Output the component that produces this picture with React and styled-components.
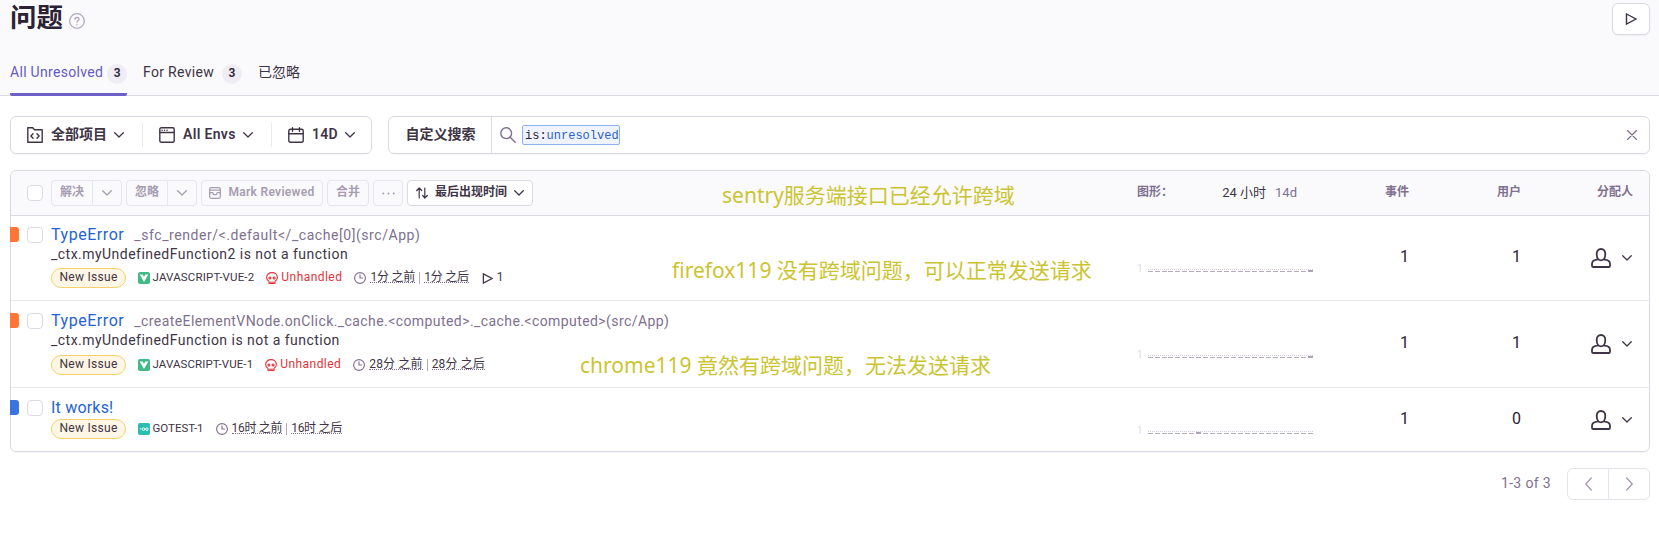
import React from "react";
import styled, { createGlobalStyle } from "styled-components";

const GlobalStyle = createGlobalStyle`
  *, *::before, *::after { box-sizing: border-box; }
  body {
    margin: 0;
    background: #fff;
    color: #3e3446;
    font: 14px/20px Roboto, "Noto Sans CJK SC", sans-serif;
  }
  button { font: inherit; color: inherit; padding: 0; margin: 0; }
  svg { display: block; flex: none; }
`;

const Page = styled.div`
  position: relative;
  height: 554px;
  overflow: hidden;
`;

const Header = styled.header`
  height: 96px;
  background: #fafafc;
  border-bottom: 1px solid #dcd9e2;
  padding: 3px 9px 0 10px;
  display: flex;
  flex-direction: column;
  justify-content: space-between;
`;

const TitleRow = styled.div`
  display: flex;
  justify-content: space-between;
  height: 32px;
`;

const Title = styled.h1`
  margin: 0;
  display: flex;
  align-items: center;
  gap: 6px;
  font-size: 26.400px;
  line-height: 30px;
  height: 30px;
  font-weight: 700;
  color: #2b2233;
  svg { margin-top: 6px; }
`;

const PlayButton = styled.button`
  width: 38px;
  height: 32px;
  display: flex;
  align-items: center;
  justify-content: center;
  background: #fff;
  border: 1px solid #dcd9e2;
  border-radius: 6px;
  box-shadow: 0 1px 1px rgba(43, 34, 51, 0.05);
`;

const Tabs = styled.nav`
  display: flex;
  gap: 16px;
  height: 35px;
  margin-bottom: -1px;
`;

const Tab = styled.div`
  display: flex;
  align-items: flex-start;
  gap: ${(p) => p.$gap || 4}px;
  height: 35px;
  padding-top: 1px;
  line-height: 20px;
  letter-spacing: ${(p) => p.$ls || 0}px;
  color: ${(p) => (p.$active ? "#6559c5" : "#3e3446")};
  border-bottom: 3px solid ${(p) => (p.$active ? "#6c5fc7" : "transparent")};
  border-radius: 2px;
  white-space: nowrap;
`;

const Badge = styled.span`
  width: 20px;
  height: 20px;
  border-radius: 10px;
  background: #efecf3;
  color: #2b2233;
  font-size: 12px;
  font-weight: 600;
  line-height: 19px;
  letter-spacing: 0;
  text-align: center;
  margin-top: 2px;
`;

const Filters = styled.div`
  display: flex;
  gap: 16px;
  padding: 20px 9px 16px 10px;
  font-weight: 600;
`;

const FilterGroup = styled.div`
  display: flex;
  align-items: center;
  width: 362px;
  height: 38px;
  border: 1px solid #dcd9e2;
  border-radius: 6px;
  box-shadow: 0 1px 1px rgba(43, 34, 51, 0.04);
`;

const Filter = styled.div`
  display: flex;
  align-items: center;
  height: 24px;
  width: ${(p) => p.$w}px;
  padding-left: 16px;
  line-height: 20px;
  letter-spacing: ${(p) => p.$ls || 0}px;
  white-space: nowrap;
  & + & { border-left: 1px solid #ebe8ef; }
  span { margin: 0 7px 0 8px; padding-bottom: 2px; }
`;

const Search = styled.div`
  flex: 1;
  display: flex;
  align-items: center;
  height: 38px;
  border: 1px solid #dcd9e2;
  border-radius: 6px;
  padding-right: 12px;
  box-shadow: 0 1px 1px rgba(43, 34, 51, 0.04);
`;

const SavedSearch = styled.div`
  width: 103px;
  height: 36px;
  line-height: 34px;
  text-align: center;
  padding-left: 1px;
  border-right: 1px solid #dcd9e2;
  margin-right: 8px;
`;

const Token = styled.div`
  height: 20px;
  margin-left: 6px;
  padding: 0 2px;
  border: 1px solid #8fb2ee;
  border-radius: 2px;
  background: #eef3fd;
  font: 500 12px/20px "Liberation Mono", monospace;
  color: #2b2233;
  flex: 1 0 auto;
  max-width: 98px;
  white-space: nowrap;
  b { font-weight: 400; color: #2c5fcf; }
`;

const Spacer = styled.div`flex: 1;`;

const Panel = styled.section`
  margin: 0 9px 0 10px;
  border: 1px solid #dcd9e2;
  border-radius: 6px;
  box-shadow: 0 1px 1px rgba(43, 34, 51, 0.04);
`;

const columns = "minmax(0, 1fr) 177px 95px 112px 128px";

const PanelHeader = styled.div`
  display: grid;
  grid-template-columns: ${columns};
  height: 45px;
  background: #fafafc;
  border-bottom: 1px solid #dcd9e2;
  border-radius: 6px 6px 0 0;
  font-size: 12px;
  font-weight: 600;
  color: #80708f;
`;

const Toolbar = styled.div`
  display: flex;
  gap: 4px;
  padding: 9px 0 0 16px;
`;

const Checkbox = styled.span`
  flex: none;
  width: 16px;
  height: 16px;
  border: 1px solid #dcd9e2;
  border-radius: 4px;
  background: #fff;
  margin: ${(p) => p.$m || "0"};
`;

const ToolButton = styled.button`
  display: flex;
  align-items: center;
  justify-content: center;
  width: ${(p) => p.$w}px;
  height: 26px;
  border: 1px solid ${(p) => (p.$on ? "#dcd9e2" : "#e8e5ed")};
  border-radius: 4px;
  background: ${(p) => (p.$on ? "#fff" : "transparent")};
  color: ${(p) => (p.$on ? "#3e3446" : "#a79db2")};
  line-height: 22px;
  letter-spacing: ${(p) => p.$ls || 0}px;
  gap: ${(p) => (p.$on ? 6.500 : 7)}px;
  white-space: nowrap;
  span { padding-bottom: 2px; }
`;

const Split = styled.div`
  display: flex;
  ${ToolButton}:first-child { border-radius: 4px 0 0 4px; }
  ${ToolButton}:last-child { border-radius: 0 4px 4px 0; border-left: 0; }
`;

const ChartHead = styled.div`
  display: flex;
  line-height: 18px;
  padding: 12px 17px 0 0;
`;

const Range = styled.span`
  font-size: 13px;
  font-weight: 400;
  color: ${(p) => (p.$active ? "#3e3446" : "#80708f")};
  margin-left: ${(p) => (p.$active ? "auto" : "9px")};
  margin-top: 1px;
`;

const HeadCell = styled.div`
  text-align: right;
  line-height: 18px;
  padding: 12px ${(p) => p.$pr || 0}px 0 0;
`;

const Row = styled.article`
  display: grid;
  grid-template-columns: ${columns};
  height: ${(p) => p.$h}px;
  &:not(:last-child) { border-bottom: 1px solid #ebe9ee; }
`;

const Issue = styled.div`
  display: flex;
  align-items: flex-start;
  padding-top: ${(p) => p.$top}px;
  margin-left: -1px;
`;

const Level = styled.span`
  flex: none;
  width: 9px;
  height: 15px;
  border-radius: 0 3px 3px 0;
  background: ${(p) => p.$color};
  margin-right: 8px;
`;

const Body = styled.div`
  margin: -2px 0 0 8px;
  white-space: nowrap;
`;

const Heading = styled.div`
  display: flex;
  align-items: baseline;
  line-height: 20px;
  height: 20px;
`;

const IssueTitle = styled.a`
  font-size: 16px;
  color: #2562d4;
  letter-spacing: ${(p) => p.$ls || 0}px;
  margin-right: 10px;
`;

const Culprit = styled.span`
  color: #80708f;
  letter-spacing: ${(p) => p.$ls || 0}px;
`;

const Message = styled.div`
  line-height: 18px;
  height: 18px;
  letter-spacing: ${(p) => p.$ls || 0}px;
`;

const Meta = styled.div`
  display: flex;
  align-items: center;
  height: 20px;
  margin-top: ${(p) => p.$mt}px;
  font-size: 12px;
  line-height: 18px;
`;

const NewTag = styled.span`
  width: 75px;
  height: 20px;
  border: 1px solid #f6d06e;
  border-radius: 10px;
  background: #fff7e5;
  line-height: 17px;
  text-align: center;
  letter-spacing: 0.3px;
  margin-right: 12px;
`;

const MetaText = styled.span`
  margin: 0 ${(p) => p.$mr}px 2px ${(p) => p.$ml || 3}px;
  font-size: ${(p) => p.$fs || 12}px;
  letter-spacing: ${(p) => p.$ls || 0}px;
  color: ${(p) => p.$color || "#3e3446"};
`;

const Time = styled.span`
  margin: 0 0 4px ${(p) => p.$ml || 0}px;
  line-height: 17px;
  height: 14px;
  border-bottom: 1px dotted #80708f;
  letter-spacing: ${(p) => p.$ls || 0}px;
`;

const Divider = styled.span`
  width: 1px;
  height: 12px;
  background: #b5a9bd;
  margin: 0 4px;
`;

const ChartCell = styled.div`
  display: flex;
  align-items: flex-end;
  height: ${(p) => p.$bottom}px;
  font-size: 10px;
  line-height: 10px;
  color: #e0dbe6;
  gap: 5px;
  span { margin-bottom: -2px; }
`;

const Bars = styled.div`
  width: 165px;
  height: 3px;
  border-top: 1px dotted #d5cedc;
  display: flex;
  align-items: flex-end;
  justify-content: space-between;
`;

const Bar = styled.i`
  width: 5px;
  height: ${(p) => (p.$peak ? 2 : 1)}px;
  background: ${(p) => (p.$peak ? "#ada3b8" : "#b5acbf")};
`;

const Count = styled.div`
  padding-top: ${(p) => p.$top}px;
  text-align: right;
  font-size: 16px;
  line-height: 20px;
  color: #2b2233;
`;

const Assignee = styled.div`
  display: flex;
  justify-content: flex-end;
  align-items: center;
  gap: 11px;
  height: 22px;
  margin-top: ${(p) => p.$top}px;
  padding-right: 17px;
`;

const Pagination = styled.footer`
  display: flex;
  justify-content: flex-end;
  align-items: center;
  margin: 16px 9px 0 0;
  height: 32px;
  color: #80708f;
  > span { padding-bottom: 2px; margin-right: 16px; letter-spacing: 0.35px; }
`;

const Pager = styled.div`
  display: flex;
  width: 83px;
  height: 32px;
  border: 1px solid #e6e2ea;
  border-radius: 6px;
`;

const PageButton = styled.button`
  flex: 1;
  display: flex;
  align-items: center;
  justify-content: center;
  border: 0;
  background: none;
  & + & { border-left: 1px solid #e6e2ea; }
`;

const Note = styled.div`
  position: absolute;
  left: ${(p) => p.$x}px;
  top: ${(p) => p.$y}px;
  font: 21px/28px "Noto Sans", "Noto Sans CJK SC", sans-serif;
  color: #cbc431;
  white-space: nowrap;
`;

const Svg = ({ size = 16, w, h, sw = 1.4, color = "#3e3446", box = "0 0 16 16", children }) => (
  <svg width={w || size} height={h || size} viewBox={box} fill="none" stroke={color}
    strokeWidth={sw} strokeLinecap="round" strokeLinejoin="round">{children}</svg>
);

const Chevron = ({ color }) => (
  <Svg w={10} h={6} box="0 0 10 6" sw={1.3} color={color}><path d="M.7.7 5 5 9.3.7" /></Svg>
);
const HelpIcon = () => (
  <Svg color="#b3a8be" sw={1.3}>
    <circle cx="8" cy="8" r="7.3" />
    <path d="M6 6.4c0-1.2.8-1.9 2-1.9s2 .7 2 1.8C10 7.7 8 7.6 8 9.2M8 11.4v.1" />
  </Svg>
);
const Play = ({ size = 12 }) => (
  <Svg size={size} box="0 0 12 12" sw={1.4}><path d="M1.5 1 11 6l-9.500 5z" strokeLinejoin="miter" /></Svg>
);
const ProjectIcon = () => (
  <Svg><path d="M.8 15.200V.8h5l1.700 2h7.700v12.400zM6 6.800 3.900 9 6 11.200M10 6.800 12.100 9 10 11.200" /></Svg>
);
const WindowIcon = () => (
  <Svg><rect x=".8" y=".8" width="14.400" height="14.400" rx="1.500" /><path d="M1 5.500h14" /><path d="M3 3.200h.1M5.500 3.200h.1M8 3.200h.1" /></Svg>
);
const CalendarIcon = () => (
  <Svg><rect x=".8" y="2.300" width="14.400" height="13" rx="1.500" /><path d="M1 6.800h14M4.500.7v3.500M11.500.7v3.500" /></Svg>
);
const SearchIcon = () => (
  <Svg color="#80708f"><circle cx="6.200" cy="6.200" r="5.400" /><path d="m10.200 10.200 5 5" /></Svg>
);
const CloseIcon = () => (
  <Svg size={10} box="0 0 10 10" color="#80708f" sw={1.2}><path d="m.5.5 9 9M9.500.5l-9 9" /></Svg>
);
const ReviewIcon = () => (
  <Svg size={12} color="#a79db2" sw={1.700}><rect x=".9" y=".9" width="14.200" height="14.200" rx="2" /><path d="M1 4.200h14M1 7.600h4l1 2.500h4l1-2.500h4" /></Svg>
);
const SortIcon = () => (
  <Svg size={12} box="0 0 12 12" sw={1.2}><path d="M3.200 11V1M.7 3.500 3.200 1l2.500 2.500M8.800 1v10M6.700 8.500 8.800 11l2.500-2.500" /></Svg>
);
const Dots = () => (
  <svg width="13" height="3" viewBox="0 0 13 3" fill="#a79db2"><circle cx="1.300" cy="1.500" r="1" /><circle cx="6.500" cy="1.500" r="1" /><circle cx="11.700" cy="1.500" r="1" /></svg>
);
const VueIcon = () => (
  <svg width="12" height="12" viewBox="0 0 12 12"><rect width="12" height="12" rx="2" fill="#41bb86" /><path d="M1.700 2.500h2.900L6 4.700l1.400-2.200h2.900L6 10z" fill="#fff" /></svg>
);
const GoIcon = () => (
  <svg width="12" height="12" viewBox="0 0 12 12"><rect width="12" height="12" rx="2" fill="#29beb0" /><path d="M1.800 5.800h1.500" stroke="#fff" strokeWidth=".8" /><circle cx="5.400" cy="6.200" r="1.300" fill="none" stroke="#fff" strokeWidth="1" /><circle cx="8.900" cy="6.200" r="1.300" fill="none" stroke="#fff" strokeWidth="1" /></svg>
);
const Skull = () => (
  <Svg size={12} color="#df3338" sw={1.500}>
    <path d="M4 12.300C2 11.400.9 9.600.9 7.300.9 3.500 4 .9 8 .9s7.100 2.600 7.100 6.400c0 2.300-1.100 4.100-3.100 5v2.800H4zM6.700 13v2M9.300 13v2" />
    <circle cx="5.200" cy="8" r="1.300" /><circle cx="10.800" cy="8" r="1.300" />
  </Svg>
);
const Clock = () => (
  <Svg size={12} color="#80708f" sw={1.500}><circle cx="8" cy="8" r="7.200" /><path d="M8 3.800V8h3.400" /></Svg>
);
const UserIcon = () => (
  <Svg size={20} box="0 0 20 20" sw={1.800}>
    <path d="M7.200 11.200C6 10 5.700 8 5.700 5.700 5.700 2.800 7.300 1 10 1s4.300 1.800 4.300 4.700c0 2.300-.3 4.300-1.500 5.500-1.500 1.400-4.100 1.400-5.600 0z" />
    <path d="M6.500 11.600C3 11.700 1 13 1 16v1.700c0 .8.500 1.300 1.300 1.300h15.400c.8 0 1.300-.5 1.300-1.300V16c0-3-2-4.300-5.500-4.400" />
  </Svg>
);

const issues = [
  { h: 85, top: 11, mt: 5, level: "#ff7738", title: "TypeError", tls: 0.55, culprit: "_sfc_render/<.default</_cache[0](src/App)", cls: 0.56,
    message: "_ctx.myUndefinedFunction2 is not a function", project: "JAVASCRIPT-VUE-2", pls: 0.17, icon: VueIcon,
    unhandled: true, first: "1分 之前", last: "1分 之后", timeLs: -0.2, replays: 1, users: 1, peak: 23, count: 31, chart: 56 },
  { h: 87, top: 12, mt: 6, level: "#ff7738", title: "TypeError", tls: 0.55, culprit: "_createElementVNode.onClick._cache.<computed>._cache.<computed>(src/App)", cls: 0.42,
    message: "_ctx.myUndefinedFunction is not a function", project: "JAVASCRIPT-VUE-1", pls: 0.1, icon: VueIcon,
    unhandled: true, first: "28分 之前", last: "28分 之后", timeLs: 0.15, users: 1, peak: 23, count: 32, chart: 57 },
  { h: 63, top: 12, mt: 1, level: "#3c74dd", title: "It works!", tls: 0.2, project: "GOTEST-1", pls: 0, icon: GoIcon,
    first: "16时 之前", last: "16时 之后", timeLs: -0.3, users: 0, peak: 7, count: 21, chart: 46 },
];

function IssueRow({ item }) {
  const Platform = item.icon;
  return (
    <Row $h={item.h}>
      <Issue $top={item.top}>
        <Level $color={item.level} />
        <Checkbox />
        <Body>
          <Heading>
            <IssueTitle $ls={item.tls}>{item.title}</IssueTitle>
            {item.culprit && <Culprit $ls={item.cls}>{item.culprit}</Culprit>}
          </Heading>
          {item.message && <Message $ls={0.47}>{item.message}</Message>}
          <Meta $mt={item.mt}>
            <NewTag>New Issue</NewTag>
            <Platform />
            <MetaText $fs={11.5} $ml={2.5} $mr={12} $ls={item.pls}>{item.project}</MetaText>
            {item.unhandled && <><Skull /><MetaText $mr={12} $ls={0.45} $color="#df3338">Unhandled</MetaText></>}
            <Clock />
            <Time $ml={4} $ls={item.timeLs}>{item.first}</Time>
            <Divider />
            <Time $ls={item.timeLs}>{item.last}</Time>
            {item.replays && <><Spacer style={{ flex: "0 0 13px" }} /><Play size={11} /><MetaText $mr={0} $ml={4}>{item.replays}</MetaText></>}
          </Meta>
        </Body>
      </Issue>
      <ChartCell $bottom={item.chart}>
        <span>1</span>
        <Bars>{Array.from({ length: 24 }, (_, i) => <Bar key={i} $peak={i === item.peak} />)}</Bars>
      </ChartCell>
      <Count $top={item.count}>1</Count>
      <Count $top={item.count}>{item.users}</Count>
      <Assignee $top={item.count}><UserIcon /><Chevron /></Assignee>
    </Row>
  );
}

export default function App() {
  return (
    <Page>
      <GlobalStyle />
      <Header>
        <TitleRow>
          <Title>问题<HelpIcon /></Title>
          <PlayButton><Play /></PlayButton>
        </TitleRow>
        <Tabs>
          <Tab $active $ls={0.3}>All Unresolved<Badge>3</Badge></Tab>
          <Tab $gap={8} $ls={0.3}>For Review<Badge>3</Badge></Tab>
          <Tab>已忽略</Tab>
        </Tabs>
      </Header>
      <Filters>
        <FilterGroup>
          <Filter $w={131}><ProjectIcon /><span>全部项目</span><Chevron /></Filter>
          <Filter $w={129} $ls={0.33}><WindowIcon /><span>All Envs</span><Chevron /></Filter>
          <Filter $w={100} $ls={0.3}><CalendarIcon /><span>14D</span><Chevron /></Filter>
        </FilterGroup>
        <Search>
          <SavedSearch>自定义搜索</SavedSearch>
          <SearchIcon />
          <Token>is:<b>unresolved</b></Token>
          <Spacer />
          <CloseIcon />
        </Search>
      </Filters>
      <Panel>
        <PanelHeader>
          <Toolbar>
            <Checkbox $m="5px 4px 0 0" />
            <Split><ToolButton $w={42}><span>解决</span></ToolButton><ToolButton $w={29}><Chevron color="#a79db2" /></ToolButton></Split>
            <Split><ToolButton $w={42}><span>忽略</span></ToolButton><ToolButton $w={29}><Chevron color="#a79db2" /></ToolButton></Split>
            <ToolButton $w={122} $ls={0.3}><ReviewIcon /><span>Mark Reviewed</span></ToolButton>
            <ToolButton $w={42}><span>合并</span></ToolButton>
            <ToolButton $w={30}><Dots /></ToolButton>
            <ToolButton $w={126} $on><SortIcon /><span>最后出现时间</span><Chevron /></ToolButton>
          </Toolbar>
          <ChartHead>图形：<Range $active>24 小时</Range><Range>14d</Range></ChartHead>
          <HeadCell>事件</HeadCell>
          <HeadCell>用户</HeadCell>
          <HeadCell $pr={16}>分配人</HeadCell>
        </PanelHeader>
        {issues.map((item, i) => <IssueRow key={i} item={item} />)}
      </Panel>
      <Pagination>
        <span>1-3 of 3</span>
        <Pager>
          <PageButton><Svg w={7} h={14} box="0 0 7 14" color="#a79db2" sw={1.4}><path d="M6.300 1 .8 7l5.500 6" /></Svg></PageButton>
          <PageButton><Svg w={7} h={14} box="0 0 7 14" color="#a79db2" sw={1.4}><path d="m.7 1 5.500 6-5.500 6" /></Svg></PageButton>
        </Pager>
      </Pagination>
      <Note $x={722} $y={181}>sentry服务端接口已经允许跨域</Note>
      <Note $x={672} $y={256}>firefox119 没有跨域问题，可以正常发送请求</Note>
      <Note $x={580} $y={351}>chrome119 竟然有跨域问题，无法发送请求</Note>
    </Page>
  );
}
